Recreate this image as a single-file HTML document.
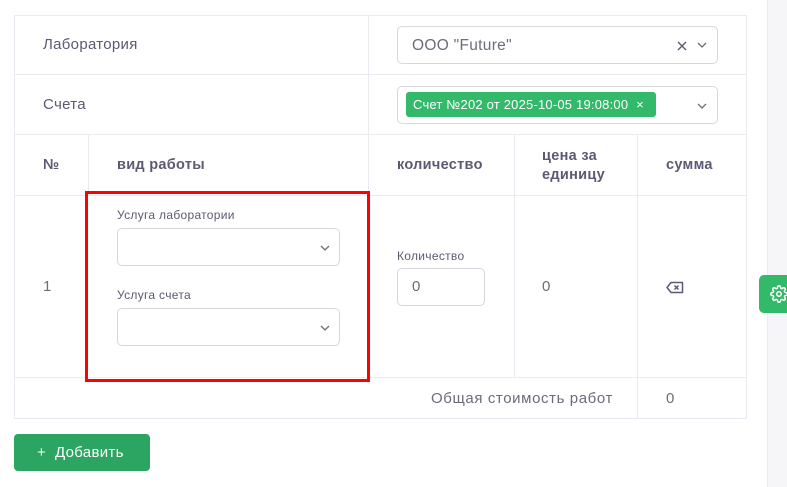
<!DOCTYPE html>
<html><head><meta charset="utf-8"><style>
*{box-sizing:border-box;margin:0;padding:0}
body{width:787px;height:487px;background:#fff;font-family:"Liberation Sans","DejaVu Sans",sans-serif;color:#6e6b7b;position:relative;overflow:hidden;letter-spacing:0.3px}
.a{position:absolute}
.h{background:#ebe9f1}
.t{font-size:15px;color:#5e5873}
.b{font-weight:bold;color:#5e5873;font-size:14.5px}
.sel{position:absolute;border:1px solid #d8d6de;border-radius:5px;background:#fff}
.lbl{font-size:12px;color:#5e5873}
</style></head><body>
<div class="a" style="left:767px;top:0;width:20px;height:487px;background:#f6f6f8;border-left:1px solid #ebe9f1"></div>
<div class="a h" style="left:14px;top:15px;width:733px;height:1px"></div>
<div class="a h" style="left:14px;top:74px;width:733px;height:1px"></div>
<div class="a h" style="left:14px;top:134px;width:733px;height:1px"></div>
<div class="a h" style="left:14px;top:195px;width:733px;height:1px"></div>
<div class="a h" style="left:14px;top:377px;width:733px;height:1px"></div>
<div class="a h" style="left:14px;top:418px;width:733px;height:1px"></div>
<div class="a h" style="left:14px;top:15px;width:1px;height:404px"></div>
<div class="a h" style="left:746px;top:15px;width:1px;height:404px"></div>
<div class="a h" style="left:368px;top:15px;width:1px;height:362px"></div>
<div class="a h" style="left:88px;top:134px;width:1px;height:61px"></div>
<div class="a h" style="left:514px;top:134px;width:1px;height:243px"></div>
<div class="a h" style="left:637px;top:134px;width:1px;height:285px"></div>

<div class="a t" style="left:43px;top:36px">Лаборатория</div>
<div class="a t" style="left:43px;top:96px">Счета</div>

<div class="sel" style="left:397px;top:26px;width:321px;height:38px">
 <div class="a" style="left:14px;top:10px;font-size:15.5px;color:#6e6b7b">ООО "Future"</div>
 <svg class="a" style="left:279px;top:14px" width="10" height="10"><path d="M1 1L9 9M9 1L1 9" stroke="#5e5873" stroke-width="1.4"/></svg>
 <svg class="a" style="left:299px;top:15px" width="10" height="7"><path d="M1 1L5 5L9 1" stroke="#6e6b7b" stroke-width="1.3" fill="none"/></svg>
</div>
<div class="sel" style="left:397px;top:86px;width:321px;height:38px">
 <div class="a" style="left:8px;top:5px;width:250px;height:25px;background:#33b96a;border-radius:3px;color:#fff;font-size:13px;line-height:25px;padding-left:7px;letter-spacing:0.2px">Счет №202 от 2025-10-05 19:08:00 <span style="margin-left:4px">×</span></div>
 <svg class="a" style="left:299px;top:16px" width="10" height="7"><path d="M1 1L5 5L9 1" stroke="#6e6b7b" stroke-width="1.3" fill="none"/></svg>
</div>

<div class="a b" style="left:43px;top:157px">№</div>
<div class="a b" style="left:117px;top:157px">вид работы</div>
<div class="a b" style="left:397px;top:157px">количество</div>
<div class="a b" style="left:542px;top:147px;line-height:19px">цена за<br>единицу</div>
<div class="a b" style="left:666px;top:157px">сумма</div>

<div class="a" style="left:43px;top:278px;font-size:15px">1</div>
<div class="a lbl" style="left:117px;top:208px">Услуга лаборатории</div>
<div class="sel" style="left:117px;top:228px;width:223px;height:38px"><svg class="a" style="left:202px;top:16px" width="10" height="7"><path d="M1 1L5 5L9 1" stroke="#6e6b7b" stroke-width="1.3" fill="none"/></svg></div>
<div class="a lbl" style="left:117px;top:288px">Услуга счета</div>
<div class="sel" style="left:117px;top:308px;width:223px;height:38px"><svg class="a" style="left:202px;top:16px" width="10" height="7"><path d="M1 1L5 5L9 1" stroke="#6e6b7b" stroke-width="1.3" fill="none"/></svg></div>
<div class="a" style="left:85px;top:191px;width:285px;height:191px;border:3px solid #f00"></div>

<div class="a lbl" style="left:397px;top:249px;font-size:12px">Количество</div>
<div class="sel" style="left:397px;top:268px;width:88px;height:38px"><div class="a" style="left:14px;top:9px;font-size:15px">0</div></div>
<div class="a" style="left:542px;top:278px;font-size:15px">0</div>
<svg class="a" style="left:666px;top:281px" width="18" height="13"><path d="M5 1.5H16.5V11.5H5L1 6.5Z" stroke="#5e5873" stroke-width="1.5" fill="none" stroke-linejoin="round"/><path d="M8.5 4.5L12.5 8.5M12.5 4.5L8.5 8.5" stroke="#5e5873" stroke-width="1.5"/></svg>

<div class="a" style="left:431px;top:390px;font-size:15px;letter-spacing:0.6px">Общая стоимость работ</div>
<div class="a" style="left:666px;top:390px;font-size:15px">0</div>

<div class="a" style="left:14px;top:434px;width:136px;height:37px;background:#2da562;border-radius:4px;color:#fff;font-size:15px;line-height:37px;padding-left:23px">+&nbsp; Добавить</div>

<div class="a" style="left:759px;top:275px;width:30px;height:38px;background:#33b96a;border-radius:5px 0 0 5px">
<svg class="a" style="left:11px;top:10px" width="18" height="18" viewBox="0 0 24 24"><circle cx="12" cy="12" r="3" stroke="#fff" stroke-width="2" fill="none"/><path d="M19.4 15a1.65 1.65 0 0 0 .33 1.82l.06.06a2 2 0 1 1-2.83 2.830l-.06-.06a1.65 1.65 0 0 0-1.82-.33 1.65 1.65 0 0 0-1 1.51V21a2 2 0 1 1-4 0v-.09A1.65 1.65 0 0 0 9 19.4a1.65 1.65 0 0 0-1.82.33l-.06.06a2 2 0 1 1-2.83-2.830l.06-.06A1.65 1.65 0 0 0 4.68 15a1.650 1.650 0 0 0-1.51-1H3a2 2 0 1 1 0-4h.09A1.65 1.65 0 0 0 4.6 9a1.65 1.65 0 0 0-.33-1.82l-.06-.06a2 2 0 1 1 2.83-2.83l.06.06A1.65 1.65 0 0 0 9 4.68 1.65 1.65 0 0 0 10 3.17V3a2 2 0 1 1 4 0v.09a1.65 1.65 0 0 0 1 1.51 1.65 1.65 0 0 0 1.82-.33l.06-.06a2 2 0 1 1 2.83 2.83l-.06.06A1.65 1.65 0 0 0 19.4 9a1.65 1.65 0 0 0 1.51 1H21a2 2 0 1 1 0 4h-.09a1.65 1.65 0 0 0-1.51 1z" stroke="#fff" stroke-width="2" fill="none"/></svg>
</div>
</body></html>
